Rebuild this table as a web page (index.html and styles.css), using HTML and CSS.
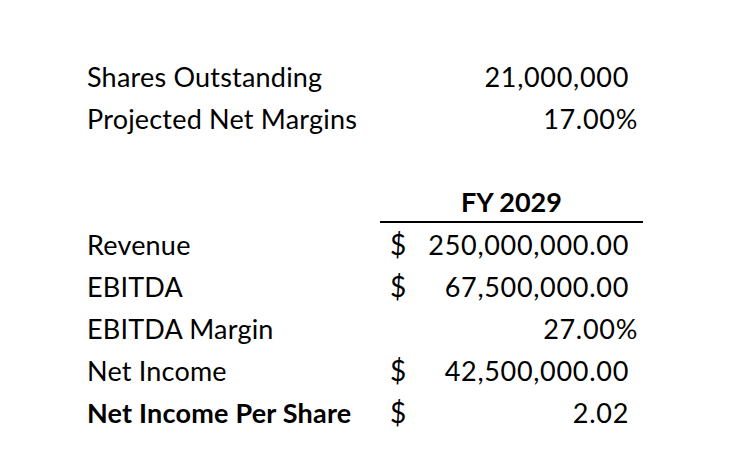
FILE: index.html
```html
<!DOCTYPE html>
<html>
<head>
<meta charset="utf-8">
<link rel="stylesheet" href="styles.css">
</head>
<body>
<div class="sheet">
  <div class="row">
    <div class="label">Shares Outstanding</div>
    <div class="val"><span class="num pad-paren">21,000,000</span></div>
  </div>
  <div class="row">
    <div class="label">Projected Net Margins</div>
    <div class="val"><span class="num pad-pct">17.00%</span></div>
  </div>
  <div class="row"></div>
  <div class="row">
    <div class="label"></div>
    <div class="val head">FY 2029</div>
  </div>
  <div class="row">
    <div class="label">Revenue</div>
    <div class="val acct"><span class="cur">$</span><span class="num pad-paren">250,000,000.00</span></div>
  </div>
  <div class="row">
    <div class="label">EBITDA</div>
    <div class="val acct"><span class="cur">$</span><span class="num pad-paren">67,500,000.00</span></div>
  </div>
  <div class="row">
    <div class="label">EBITDA Margin</div>
    <div class="val"><span class="num pad-pct">27.00%</span></div>
  </div>
  <div class="row">
    <div class="label">Net Income</div>
    <div class="val acct"><span class="cur">$</span><span class="num pad-paren">42,500,000.00</span></div>
  </div>
  <div class="row bold">
    <div class="label">Net Income Per Share</div>
    <div class="val acct"><span class="cur">$</span><span class="num pad-paren">2.02</span></div>
  </div>
</div>
</body>
</html>
```
FILE: styles.css
```css
html, body {
  margin: 0;
  padding: 0;
  background: #ffffff;
}
body {
  font-family: "Lato", "Open Sans", sans-serif;
  font-size: 27px;
  color: #000000;
}
.sheet {
  padding: 55px 0 0 80px;
  display: flex;
  flex-direction: column;
}
.row {
  display: grid;
  grid-template-columns: 300px 263px;
  height: 42px;
  align-items: center;
}
.label {
  padding-left: 7px;
  white-space: nowrap;
  letter-spacing: 0.2px;
}
.val {
  display: flex;
  justify-content: flex-end;
  align-items: center;
  height: 100%;
  white-space: nowrap;
}
.val.acct {
  justify-content: space-between;
}
.num {
  letter-spacing: 0.7px;
}
.cur {
  padding-left: 10px;
  font-size: 28px;
}
.pad-paren {
  padding-right: 14px;
}
.pad-pct {
  padding-right: 5px;
}
.head {
  justify-content: center;
  font-weight: bold;
  border-bottom: 2px solid #000;
  box-sizing: border-box;
}
.bold {
  font-weight: bold;
}
.bold .val {
  font-weight: normal;
}
```
